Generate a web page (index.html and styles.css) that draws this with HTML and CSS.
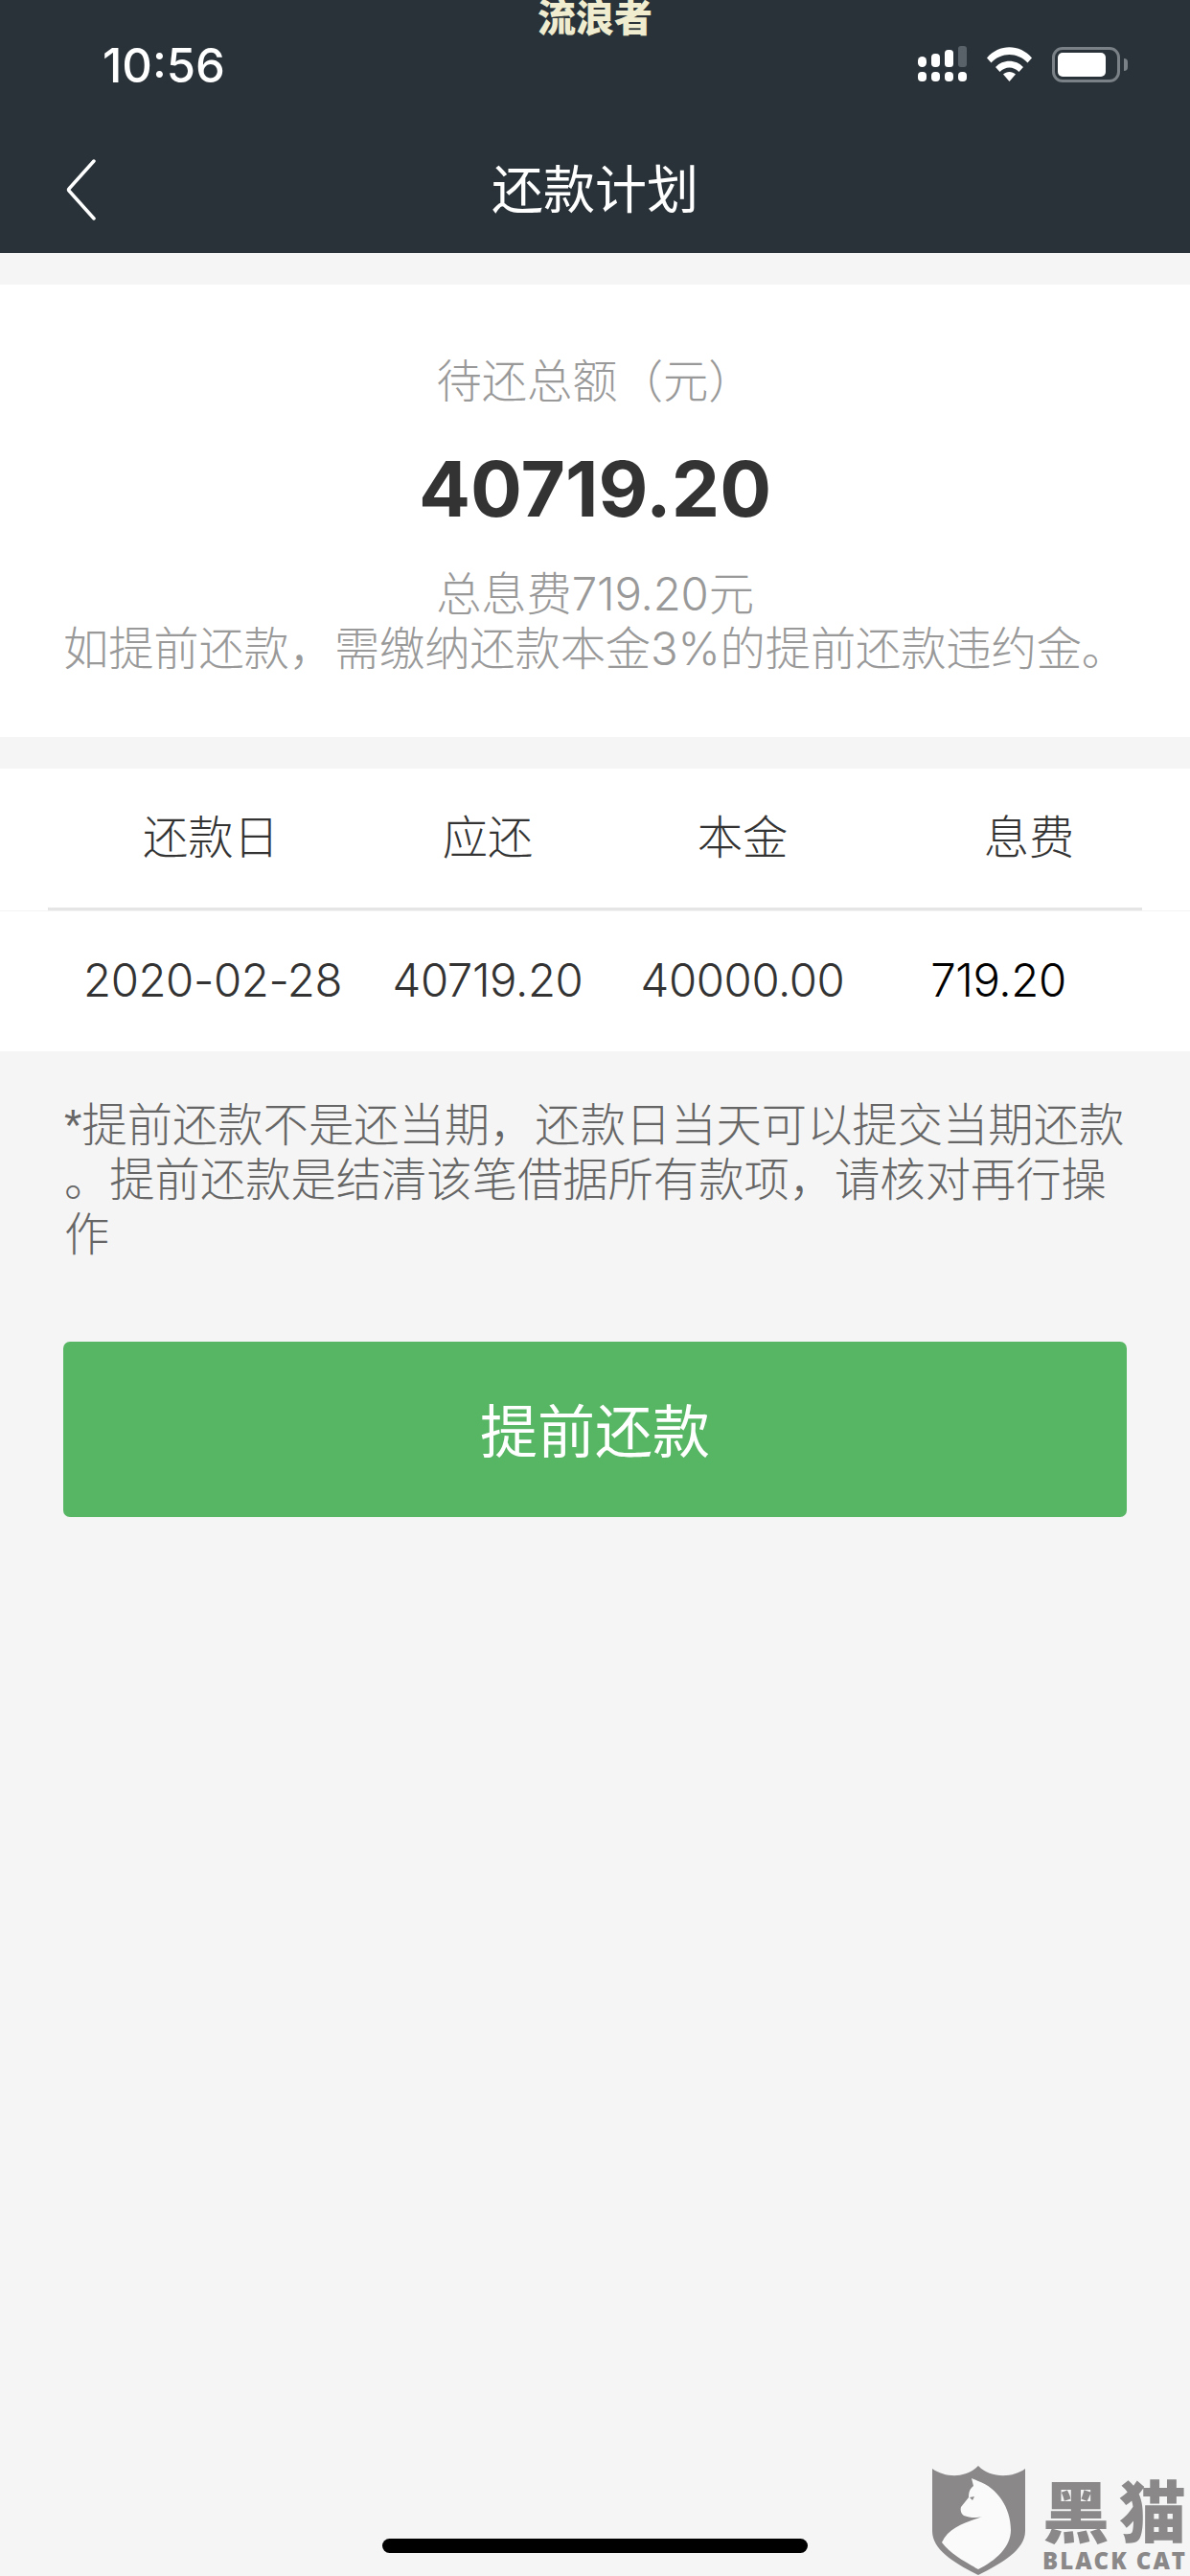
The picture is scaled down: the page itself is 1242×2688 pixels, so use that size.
FILE: index.html
```html
<!DOCTYPE html>
<html lang="zh-CN">
<head>
    <meta charset="UTF-8">
    <title>还款计划</title>
    <link rel="stylesheet" href="styles.css">
</head>
<body>
    <div class="watermark">流浪者</div>

    <header class="top">
        <div class="status-bar">
            <span class="time">10:56</span>
            <div class="status-icons">
                <svg class="signal" width="51" height="37" viewBox="0 0 51 37">
                    <rect x="0" y="11" width="9" height="11" rx="4.5" fill="#fff"/>
                    <rect x="14" y="8" width="9" height="14" rx="4" fill="#fff"/>
                    <rect x="28" y="4" width="9" height="18" rx="3.5" fill="#fff"/>
                    <rect x="42" y="0" width="9" height="22" rx="3" fill="#5a6269"/>
                    <rect x="0" y="27" width="9" height="10" rx="4" fill="#fff"/>
                    <rect x="14" y="27" width="9" height="10" rx="4" fill="#fff"/>
                    <rect x="28" y="27" width="9" height="10" rx="4" fill="#fff"/>
                    <rect x="42" y="27" width="9" height="10" rx="4" fill="#fff"/>
                </svg>
                <svg class="wifi" width="47" height="36" viewBox="0 0 47 36">
                    <path d="M0 11.5C12.500 -3.500 34.500 -3.500 47 11.500L42.500 16.500C32 5 15 5 4.500 16.500Z" fill="#fff"/>
                    <path d="M9 21C16.500 12.500 30.500 12.500 38 21L33.500 26C27.500 20 19.500 20 13.500 26Z" fill="#fff"/>
                    <path d="M17 28.500C20.500 25 26.500 25 30 28.500L23.500 36Z" fill="#fff"/>
                </svg>
                <div class="battery">
                    <div class="battery-level"></div>
                </div>
                <div class="battery-nub"></div>
            </div>
        </div>
        <div class="nav">
            <svg class="back" width="32" height="64" viewBox="0 0 32 64">
                <path d="M29 2L3 31Q2 32 3 33L29 62" fill="none" stroke="#fff" stroke-width="3.500" stroke-linecap="round"/>
            </svg>
            <h1 class="title">还款计划</h1>
        </div>
    </header>

    <section class="summary">
        <p class="summary-label">待还总额（元）</p>
        <p class="summary-amount">40719.20</p>
        <p class="summary-note">总息费719.20元</p>
        <p class="summary-note">如提前还款，需缴纳还款本金3%的提前还款违约金。</p>
    </section>

    <section class="plan">
        <div class="plan-row plan-head">
            <span class="col-date">还款日</span>
            <span>应还</span>
            <span>本金</span>
            <span class="col-fee">息费</span>
        </div>
        <div class="plan-row plan-body">
            <span class="col-date">2020-02-28</span>
            <span>40719.20</span>
            <span>40000.00</span>
            <span class="col-fee">719.20</span>
        </div>
    </section>

    <p class="notice">*提前还款不是还当期，还款日当天可以提交当期还款<br>。提前还款是结清该笔借据所有款项，请核对再行操<br>作</p>

    <button class="repay" type="button">提前还款</button>

    <div class="home-bar"></div>

    <div class="logo">
        <svg width="98" height="115" viewBox="0 0 98 115">
            <path d="M0 3C14 13 36 13 48 0C60 13 84 13 97 3V68C97 88 72 102 48 114C24 102 0 88 0 68Z" fill="#8a8888"/>
            <path d="M41 13L48 16C68 23 82 44 82 67C82 85 66 99 48 108C34 100 19 92 10 80C17 64 36 59 52 53C46 55 38 54 33 52C30 50 29 46 30 43L38 33C38 28 39 24 43 21Z" fill="#fafafa"/>
            <path d="M39 33L44 32L42 36Z" fill="#8a8888"/>
        </svg>
        <div class="logo-text">
            <div class="logo-cn">
                <span>黑</span>
                <span>猫</span>
            </div>
            <span class="logo-en">BLACK CAT</span>
        </div>
    </div>
</body>
</html>
```

FILE: styles.css
```css
html, body {
    margin: 0;
    padding: 0;
}

body {
    position: relative;
    width: 1242px;
    height: 2688px;
    overflow: hidden;
    background-color: #f5f5f5;
    font-family: Inter, "Noto Sans CJK SC", sans-serif;
    font-size: 47.3px;
    font-weight: 300;
    color: #333;
}

p, h1 {
    margin: 0;
}

.watermark {
    position: absolute;
    top: -9px;
    left: 561px;
    font-family: "Noto Sans CJK SC", sans-serif;
    font-size: 40px;
    line-height: 50px;
    font-weight: 900;
    color: #efecd0;
}

.top {
    height: 264px;
    background-color: #283238;
    color: #fff;
}

.status-bar {
    display: flex;
    align-items: flex-start;
    justify-content: space-between;
    height: 136px;
    padding: 48px 65px 0 107px;
    box-sizing: border-box;
}

.time {
    margin-top: 2px;
    font-size: 49px;
    font-weight: 500;
    line-height: 38px;
}

.status-icons {
    display: flex;
    align-items: flex-start;
}

.signal {
    margin-right: 21px;
}

.wifi {
    margin-top: 1px;
    margin-right: 21px;
}

.battery {
    width: 71px;
    height: 37px;
    margin-top: 1px;
    padding: 3px;
    box-sizing: border-box;
    border: 3px solid #7b8287;
    border-radius: 11px;
}

.battery-level {
    width: 50px;
    height: 25px;
    background-color: #fff;
    border-radius: 5px;
}

.battery-nub {
    width: 4px;
    height: 13px;
    margin-top: 13px;
    margin-left: 4px;
    background-color: #7b8287;
    border-radius: 0 4px 4px 0;
}

.nav {
    position: relative;
    display: flex;
    align-items: center;
    justify-content: center;
    height: 122px;
}

.back {
    position: absolute;
    left: 69px;
    top: 30px;
}

.title {
    margin-top: -6px;
    font-size: 54px;
    font-weight: 400;
}

.summary {
    margin-top: 33px;
    height: 472px;
    padding-top: 71px;
    box-sizing: border-box;
    background-color: #fff;
    text-align: center;
    color: #999;
}

.summary-label {
    line-height: 60px;
}

.summary-amount {
    margin-top: 32px;
    margin-bottom: 31px;
    font-size: 80px;
    line-height: 100px;
    font-weight: 700;
    color: #333;
}

.summary-note {
    line-height: 57px;
    letter-spacing: -0.15px;
    white-space: nowrap;
}

.plan {
    margin-top: 33px;
    background-color: #fff;
}

.plan-row {
    display: grid;
    grid-template-columns: 340px 238px 294px 270px;
    padding: 0 50px;
    text-align: center;
    align-items: center;
}

.plan-head {
    height: 148px;
    margin: 0 50px;
    padding: 0 0 8px;
    box-sizing: border-box;
    border-bottom: 3px solid #e5e5e5;
}

.plan-head .col-date {
    padding-left: 2px;
    padding-right: 2px;
}

.plan-head .col-fee {
    padding-left: 34px;
}

.plan-body {
    height: 142px;
    padding-bottom: 4px;
    border-top: 1px solid #f3f3f3;
    letter-spacing: -0.4px;
}

.plan-body .col-date {
    padding-left: 4px;
}

.plan-body .col-fee {
    padding-right: 30px;
    color: #000;
}

.notice {
    margin-top: 49px;
    padding: 0 67px;
    font-family: "Liberation Sans", "Noto Sans CJK SC", sans-serif;
    line-height: 57px;
    color: #666;
    white-space: nowrap;
}

.repay {
    display: block;
    width: 1110px;
    height: 183px;
    margin: 83px 66px 0;
    padding: 0 0 4px;
    border: none;
    border-radius: 7px;
    background-color: #57b664;
    color: #fff;
    font-family: inherit;
    font-size: 60px;
    font-weight: 400;
}

.home-bar {
    position: absolute;
    left: 399px;
    top: 2649px;
    width: 444px;
    height: 15px;
    background-color: #000;
    border-radius: 8px;
}

.logo {
    position: absolute;
    left: 973px;
    top: 2573px;
    display: flex;
    gap: 17px;
}

.logo-text {
    display: flex;
    flex-direction: column;
    width: 150px;
    padding-top: 4px;
    color: #8a8888;
}

.logo-cn {
    display: flex;
    justify-content: space-between;
    font-family: "Noto Sans CJK SC", sans-serif;
    font-size: 70px;
    line-height: 82px;
    font-weight: 900;
}

.logo-en {
    font-family: "Open Sans", sans-serif;
    font-size: 24px;
    line-height: 26px;
    font-weight: 800;
    letter-spacing: 2px;
    white-space: nowrap;
}
```
